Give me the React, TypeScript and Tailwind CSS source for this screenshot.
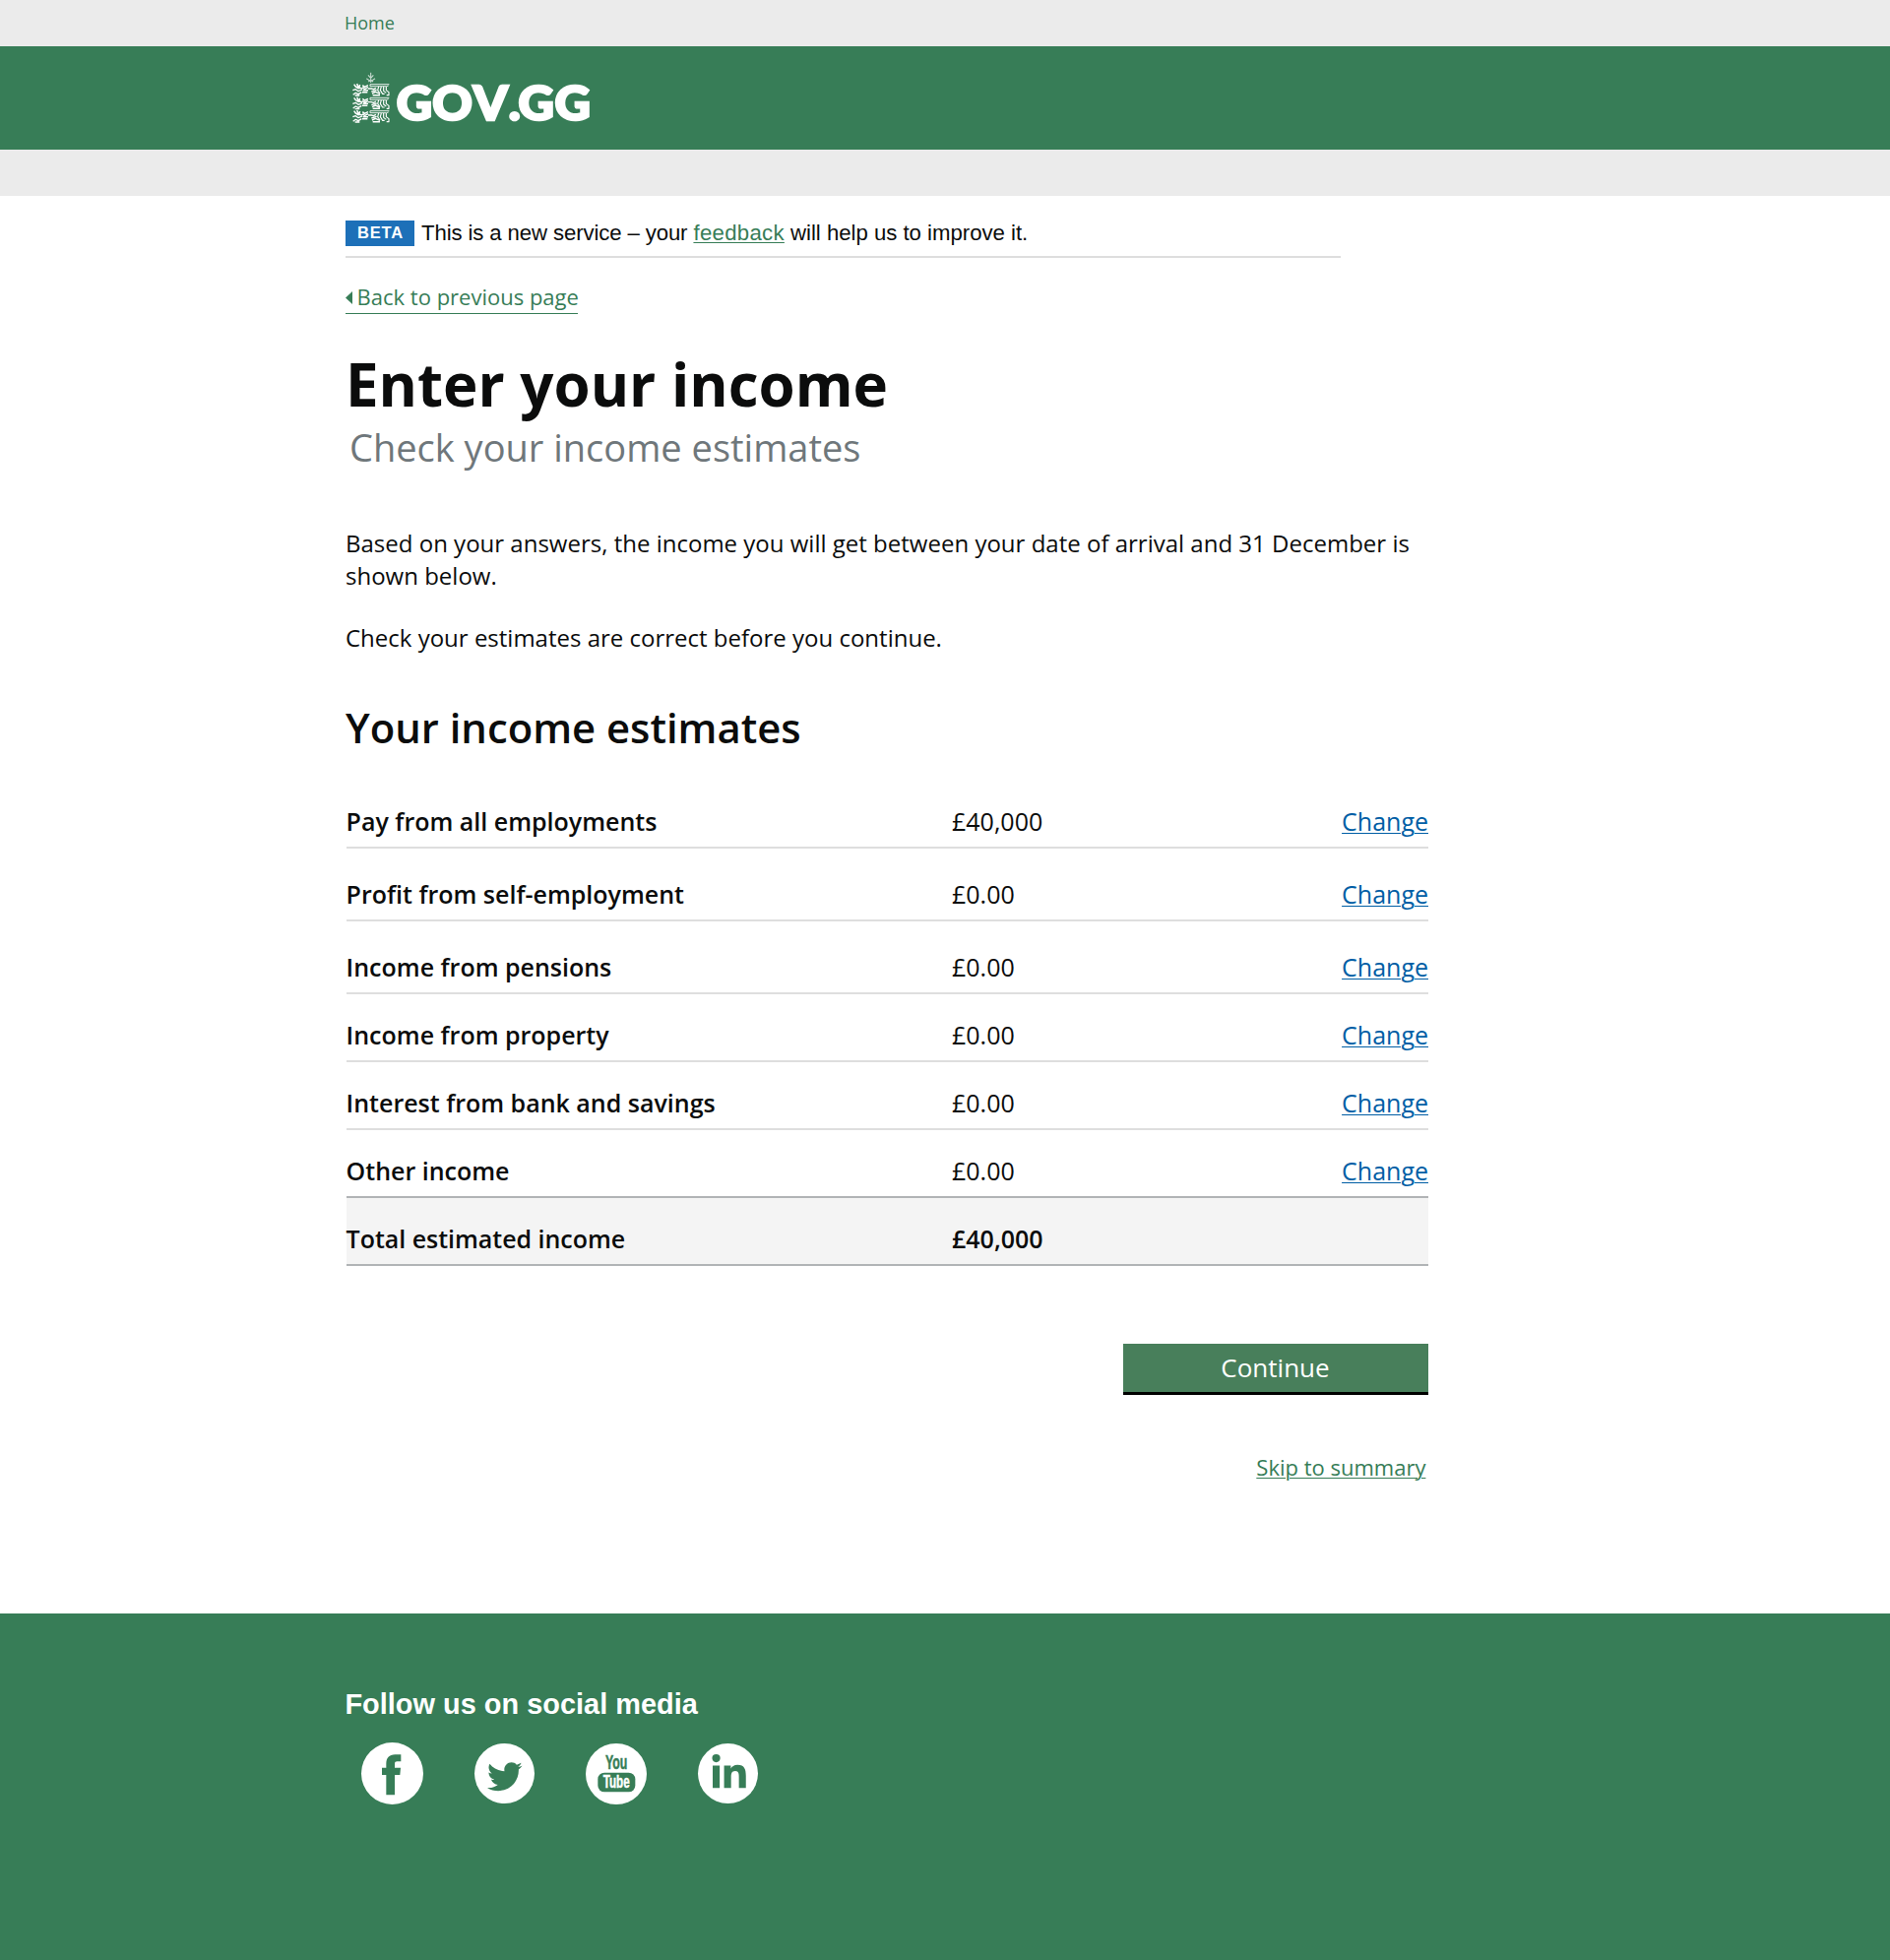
import type { ReactNode } from "react";
import { FaLinkedinIn, FaTwitter } from "react-icons/fa";

type Row = { label: string; value: string; tall?: boolean };

const rows: Row[] = [
  { label: "Pay from all employments", value: "£40,000", tall: true },
  { label: "Profit from self-employment", value: "£0.00", tall: true },
  { label: "Income from pensions", value: "£0.00", tall: true },
  { label: "Income from property", value: "£0.00" },
  { label: "Interest from bank and savings", value: "£0.00" },
  { label: "Other income", value: "£0.00" },
];

/* One of the three stacked lions of the crest, in a 114 x 38 box. */
function Lion({ y }: { y: number }) {
  return (
    <g transform={`translate(54 ${y})`} fill="none" stroke="#fff" strokeWidth="3" strokeLinejoin="round">
      <path d="M5 2 L10 9 L20 15 M14 0 L17 8 L24 14 M23 3 L20 12 L30 15" strokeWidth="4.5" />
      <path d="M1 20 L10 17 L18 23 L30 18 M2 34 L10 28 L18 32 L28 26 M8 36 H22" strokeWidth="4" />
      <path d="M31 5 L37 10 L48 5 M30 12 L38 16 L48 11 M32 20 H48 M30 26 H46" strokeWidth="4.5" />
      <path d="M112 2 H54 V8 H104 L110 6" strokeWidth="2.6" />
      <path d="M48 15 H58 L64 17 L72 13 M58 24 L74 19" strokeWidth="4" />
      <path d="M80 9 L77 20 L84 30 M88 9 L85 20 L92 31 H98 M95 9 V22 L103 28 M103 9 V20 L111 26 V35 H104" strokeWidth="3.4" />
      <path d="M60 30 L70 25 L84 31 M62 35 H84" strokeWidth="4.5" />
    </g>
  );
}

function Logo() {
  return (
    <svg className="block h-[105px] w-[260px]" viewBox="350 47 260 105" role="img" aria-label="GOV.GG">
      <g transform="translate(340 0) scale(0.33333)">
        <path
          d="M110 221 V252 M102 229 L110 238 L118 229 M97 239 L110 248 L123 239 M103 249 L110 243 L117 249"
          fill="none"
          stroke="#fff"
          strokeOpacity="0.7"
          strokeWidth="3.4"
        />
        <Lion y={255} />
        <Lion y={296} />
        <Lion y={336} />
      </g>
      <text
        transform="scale(1.035 1)"
        x="389.1 424.4 464.6 499.2 508.8 544.4"
        y="121.7"
        className="font-black [font-family:Lato,sans-serif]"
        fontSize="48.4"
        fill="#fff"
        stroke="#fff"
        strokeWidth="2.6"
      >
        GOV.GG
      </text>
    </svg>
  );
}

function Circle({ size, children }: { size: string; children: ReactNode }) {
  return (
    <a className="flex h-[63px] w-[63px] items-center justify-center">
      <span className={`flex items-center justify-center rounded-full bg-white ${size}`}>{children}</span>
    </a>
  );
}

export default function App() {
  return (
    <div className="flex min-h-[1991px] flex-col bg-white text-[#0b0c0c] [font-family:'Open_Sans',sans-serif]">
      <div className="h-[47px] bg-[#ebebeb] pl-[350px] text-lg leading-[46px] text-[#377d57]">Home</div>
      <header className="h-[105px] bg-[#377d57] pl-[350px]">
        <Logo />
      </header>
      <div className="h-[47px] bg-[#ebebeb]" />

      <main className="ml-[351px] flex w-[1100px] flex-col">
        <div className="flex h-[63px] w-[1011px] border-b-2 border-[#dedede] pt-[25px] [font-family:'Liberation_Sans',sans-serif]">
          <strong className="-mt-px h-[27px] w-[70px] border-t border-white bg-[#1d70b8] pl-3 text-[16.5px] leading-[25px] font-bold tracking-[0.8px] text-white">
            BETA
          </strong>
          <p className="ml-[7px] text-[22.2px] leading-[26px] whitespace-nowrap">
            <span className="tracking-[-0.12px]">This is a new service – your </span>
            <a className="tracking-[0.3px] text-[#377d57] underline decoration-1 underline-offset-2">feedback</a>
            <span className="tracking-[-0.02px]"> will help us to improve it.</span>
          </p>
        </div>

        <a className="mt-[23px] flex w-[236px] items-center gap-[4.6px] border-b border-[#377d57] text-[22px] leading-[33px] whitespace-nowrap text-[#377d57]">
          <svg className="mt-0.5 h-[13px] w-[7px] shrink-0" viewBox="0 0 7 13" fill="currentColor">
            <path d="M7 0 V13 L0 6.5 Z" />
          </svg>
          Back to previous page
        </a>

        <h1 className="mt-[33px] text-[60px] leading-[76px] font-bold">Enter your income</h1>
        <p className="mt-px ml-1 text-[38px] leading-[50px] text-[#6f777b]">Check your income estimates</p>

        <p className="mt-[56px] text-2xl leading-[33px] tracking-[0.005px]">
          Based on your answers, the income you will get between your date of arrival and 31 December is shown below.
        </p>
        <p className="mt-[30px] text-2xl leading-[33px]">Check your estimates are correct before you continue.</p>

        <h2 className="mt-[46px] text-[41.8px] leading-[58px] font-semibold">Your income estimates</h2>

        <div className="mt-5 ml-px flex flex-col text-[25px] leading-[34px]">
          {rows.map((row, i) => (
            <div
              key={row.label}
              className={`flex items-end border-b-2 pb-[9px] ${row.tall ? "h-[74px]" : "h-[69px]"} ${
                i === rows.length - 1 ? "border-[#b1b4b6]" : "border-[#dedede]"
              }`}
            >
              <span className="-ml-[0.4px] w-[615.4px] font-semibold">{row.label}</span>
              <span>{row.value}</span>
              <a className="ml-auto text-[#005ea5] underline decoration-1 underline-offset-2">Change</a>
            </div>
          ))}
          <div className="flex h-[69px] items-end border-b-2 border-[#b1b4b6] bg-[#f4f4f4] pb-[9px] font-semibold">
            <span className="-ml-[0.4px] w-[615.4px] tracking-[-0.03px]">Total estimated income</span>
            <span>£40,000</span>
          </div>
        </div>

        <button className="mt-[79px] h-[52px] w-[310px] self-end border-b-3 border-black bg-[#487f5b] pr-px text-[26px] leading-[49px] text-white">
          Continue
        </button>
        <a className="mt-[58px] mr-[2.6px] self-end text-[22px] leading-[31px] text-[#377d57] underline decoration-1 underline-offset-2">
          Skip to summary
        </a>
      </main>

      <footer className="mt-[133px] flex-1 bg-[#377d57] pt-[75px] pl-[350.4px]">
        <h2 className="text-[28.9px] leading-[34px] font-bold tracking-[0.02px] text-white [font-family:'Liberation_Sans',sans-serif]">
          Follow us on social media
        </h2>
        <div className="mt-[22px] ml-[16.6px] flex gap-[50.7px] text-[#377d57]">
          <Circle size="h-[63px] w-[63px]">
            <svg className="h-[63px] w-[63px]" viewBox="81 450 189 189" fill="currentColor">
              <path d="M202 487 H184 C166 487 157 498 157 514 V527 H144 V549 H157 V610 H183 V549 H199 L201 527 H183 V515 C183 510 186 508 190 508 H202 Z" />
            </svg>
          </Circle>
          <Circle size="h-[61px] w-[61px]">
            <FaTwitter className="mt-[6px] ml-[2px] text-[35.5px]" />
          </Circle>
          <Circle size="h-[62px] w-[62px]">
            <svg className="h-[62px] w-[62px]" viewBox="764 452 186 186" fill="currentColor">
              <rect x="801" y="541" width="114" height="59" rx="20" />
              <text
                x="824"
                y="530"
                fontSize="59"
                textLength="67"
                lengthAdjust="spacingAndGlyphs"
                stroke="currentColor"
                strokeWidth="1.5"
                className="font-bold [font-family:'Liberation_Sans',sans-serif]"
              >
                You
              </text>
              <text
                x="817"
                y="587"
                fontSize="54"
                textLength="81"
                lengthAdjust="spacingAndGlyphs"
                fill="#fff"
                stroke="#fff"
                strokeWidth="1.5"
                className="font-bold [font-family:'Liberation_Sans',sans-serif]"
              >
                Tube
              </text>
            </svg>
          </Circle>
          <Circle size="h-[61px] w-[61px]">
            <FaLinkedinIn className="ml-[3px] text-[39.2px]" />
          </Circle>
        </div>
      </footer>
    </div>
  );
}
